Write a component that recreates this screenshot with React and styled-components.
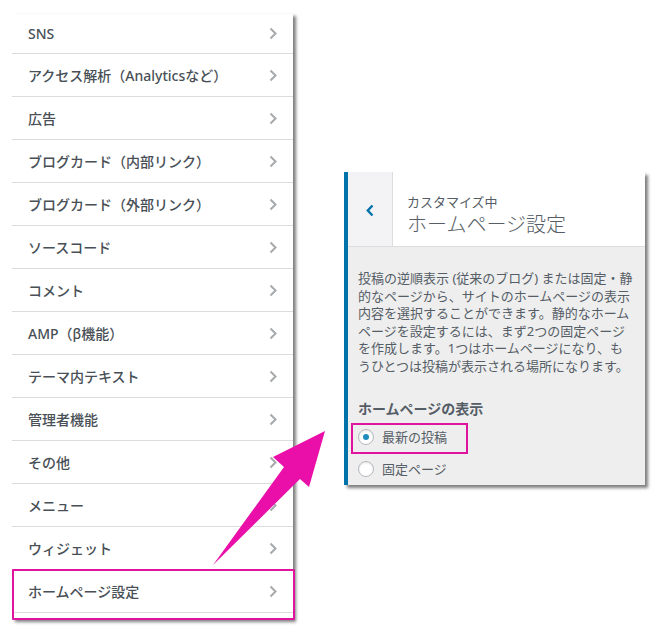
import React from 'react';
import styled, { createGlobalStyle } from 'styled-components';

const GlobalStyle = createGlobalStyle`
    html, body {
        margin: 0;
        padding: 0;
        background: #ffffff;
    }
    body {
        font-family: "Noto Sans", "Noto Sans CJK JP", sans-serif;
        color: #555d66;
    }
`;

const Page = styled.div`
    position: relative;
    width: 669px;
    height: 639px;
    display: flex;
    align-items: flex-start;
    gap: 51px;
    padding: 14px 0 0 12px;
    box-sizing: border-box;
    overflow: hidden;
`;

const SectionList = styled.ul`
    list-style: none;
    margin: 0;
    padding: 0;
    width: 281px;
    background: #fff;
    box-shadow: 3px 2px 3px rgba(0, 0, 0, 0.5);
`;

const SectionRow = styled.li`
    position: relative;
    display: flex;
    align-items: center;
    justify-content: space-between;
    height: ${p => (p.$first ? 39 : 42)}px;
    padding: 0 16px 0 16px;
    border-bottom: 1px solid #dcdcde;
    font-size: 14px;
    font-weight: 500;
    color: #484f56;
    &::after {
        content: '';
        display: ${p => (p.$marked ? 'block' : 'none')};
        position: absolute;
        box-sizing: border-box;
        left: 0;
        top: -1px;
        width: 283px;
        height: 51px;
        border: 2px solid #e0139f;
        border-radius: 1px;
        pointer-events: none;
    }
`;

const Stub = styled.li`
    height: 7px;
`;

const Chevron = styled.svg`
    width: 8px;
    height: 13px;
    flex: none;
`;

const Customizer = styled.div`
    margin-top: 158px;
    width: 297px;
    border-left: 4px solid #0073aa;
    background: #eeeeee;
    box-shadow: 3px 3px 3px rgba(0, 0, 0, 0.5);
`;

const Header = styled.div`
    display: flex;
    height: 74px;
    background: #fff;
    border-bottom: 1px solid #dddddd;
`;

const BackButton = styled.div`
    width: 44px;
    flex: none;
    display: flex;
    align-items: center;
    justify-content: center;
    background: #f3f3f5;
    border-right: 1px solid #dddddd;
    padding-top: 2px;
`;

const TitleBlock = styled.div`
    display: flex;
    flex-direction: column;
    padding: 21px 0 0 14px;
`;

const Caption = styled.span`
    font-size: 13px;
    line-height: 18px;
    color: #555d66;
`;

const Title = styled.span`
    font-size: 20px;
    font-weight: 300;
    line-height: 28px;
    color: #555d66;
`;

const Body = styled.div`
    padding: 23px 10px 8px 10px;
`;

const Description = styled.p`
    margin: 0;
    font-size: 13px;
    line-height: 17.6px;
    color: #555d66;
    span {
        display: block;
        white-space: nowrap;
    }
`;

const ControlTitle = styled.div`
    margin-top: 23px;
    font-size: 14px;
    line-height: 20px;
    font-weight: 700;
    color: #555d66;
`;

const RadioList = styled.div`
    display: flex;
    flex-direction: column;
    gap: 16px;
    margin-top: 10px;
`;

const RadioRow = styled.label`
    position: relative;
    display: flex;
    align-items: center;
    gap: 8px;
    height: 16px;
    font-size: 13px;
    color: #555d66;
    &::after {
        content: '';
        display: ${p => (p.$marked ? 'block' : 'none')};
        position: absolute;
        box-sizing: border-box;
        left: -7px;
        top: -6px;
        width: 117px;
        height: 31px;
        border: 2px solid #e0139f;
        pointer-events: none;
    }
`;

const RadioDot = styled.span`
    width: 14px;
    height: 14px;
    flex: none;
    border-radius: 50%;
    border: 1px solid #b4b9be;
    background: #fff;
    box-shadow: inset 0 1px 2px rgba(0, 0, 0, 0.1);
    display: flex;
    align-items: center;
    justify-content: center;
    &::before {
        content: '';
        display: ${p => (p.$checked ? 'block' : 'none')};
        width: 6px;
        height: 6px;
        border-radius: 50%;
        background: #1e8cbe;
    }
`;

const ArrowLayer = styled.svg`
    position: absolute;
    left: 0;
    top: 0;
    width: 669px;
    height: 639px;
    pointer-events: none;
`;

const sections = [
    'SNS',
    'アクセス解析（Analyticsなど）',
    '広告',
    'ブログカード（内部リンク）',
    'ブログカード（外部リンク）',
    'ソースコード',
    'コメント',
    'AMP（β機能）',
    'テーマ内テキスト',
    '管理者機能',
    'その他',
    'メニュー',
    'ウィジェット',
    'ホームページ設定',
];

const description = [
    '投稿の逆順表示 (従来のブログ) または固定・静',
    '的なページから、サイトのホームページの表示',
    '内容を選択することができます。静的なホーム',
    'ページを設定するには、まず2つの固定ページ',
    'を作成します。1つはホームページになり、も',
    'うひとつは投稿が表示される場所になります。',
];

const RightChevron = () => (
    <Chevron viewBox="0 0 8 13">
        <polyline points="1.5,1.5 6.5,6.5 1.5,11.5" fill="none" stroke="#a7aaad" strokeWidth="2" />
    </Chevron>
);

const App = () => (
    <>
        <GlobalStyle />
        <Page>
            <SectionList>
                {sections.map((name, i) => (
                    <SectionRow key={name} $first={i === 0} $marked={name === 'ホームページ設定'}>
                        {name}
                        <RightChevron />
                    </SectionRow>
                ))}
                <Stub />
            </SectionList>

            <Customizer>
                <Header>
                    <BackButton>
                        <Chevron viewBox="0 0 8 13">
                            <polyline points="6.5,1.5 1.8,6.5 6.5,11.5" fill="none" stroke="#0073aa" strokeWidth="2.4" />
                        </Chevron>
                    </BackButton>
                    <TitleBlock>
                        <Caption>カスタマイズ中</Caption>
                        <Title>ホームページ設定</Title>
                    </TitleBlock>
                </Header>
                <Body>
                    <Description>
                        {description.map(line => <span key={line}>{line}</span>)}
                    </Description>
                    <ControlTitle>ホームページの表示</ControlTitle>
                    <RadioList>
                        <RadioRow $marked>
                            <RadioDot $checked />
                            最新の投稿
                        </RadioRow>
                        <RadioRow>
                            <RadioDot />
                            固定ページ
                        </RadioRow>
                    </RadioList>
                </Body>
            </Customizer>

            <ArrowLayer viewBox="0 0 669 639">
                <polygon
                    points="325,431 309,487 300,479 213,565 284,467 273,457"
                    fill="#e90fa8"
                />
            </ArrowLayer>
        </Page>
    </>
);

export default App;
